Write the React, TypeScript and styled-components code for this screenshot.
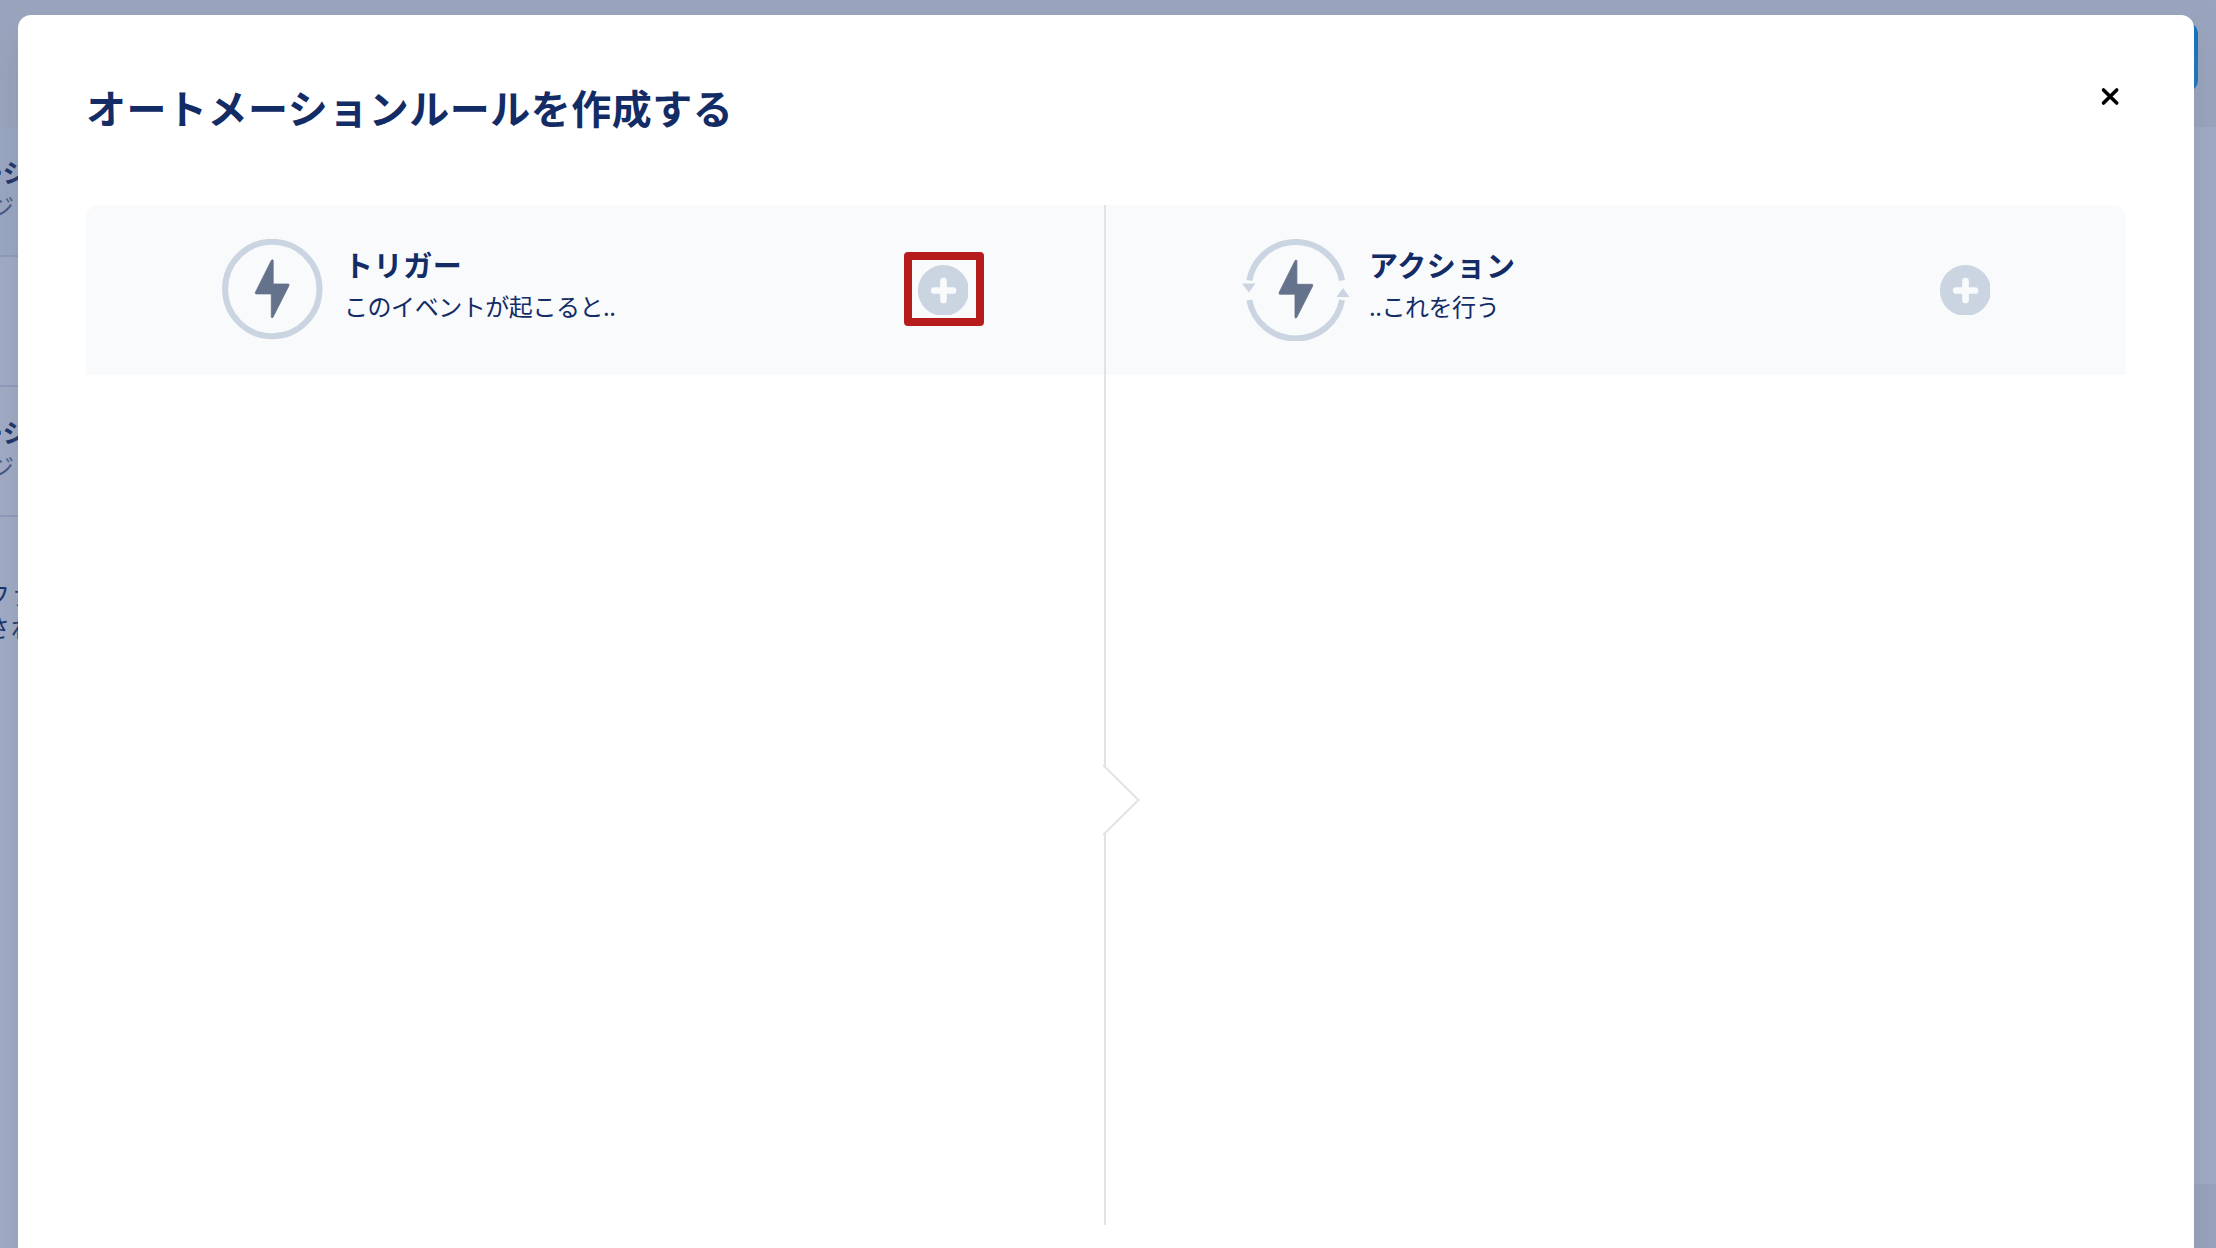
import React from 'react';
import styled, { createGlobalStyle } from 'styled-components';

const GlobalStyle = createGlobalStyle`
  * {
    box-sizing: border-box;
  }
  body {
    margin: 0;
    overflow: hidden;
    color: #132c66;
    font-family: 'Noto Sans CJK JP', sans-serif;
  }
  h1, h2, p {
    margin: 0;
  }
`;

const Page = styled.div`
  position: relative;
  display: flex;
  flex-direction: column;
  width: 100vw;
  height: 100vh;
  overflow: hidden;
  background: #a1abc6;
`;

const TopBar = styled.header`
  display: flex;
  justify-content: flex-end;
  flex: none;
  height: 127px;
  padding: 22px 18px 0 0;
  background: #9aa4be;
`;

const CreateButton = styled.div`
  width: 160px;
  height: 70px;
  border-radius: 12px;
  background: #1170bf;
`;

const RuleRow = styled.div<{ tinted?: boolean }>`
  flex: none;
  width: 50%;
  height: 130px;
  padding-top: 27px;
  border-bottom: 2px solid #8f9abb;
  background: ${({ tinted }) => (tinted ? '#9ba6c3' : 'transparent')};
`;

const RuleName = styled.p`
  margin-left: -23px;
  font-size: 26px;
  font-weight: 700;
  line-height: 36px;
  white-space: nowrap;
`;

const RuleHint = styled.p`
  margin-left: -10px;
  color: #42567f;
  font-size: 24px;
  line-height: 32px;
  white-space: nowrap;
`;

const Note = styled.p`
  flex: 1;
  margin-left: -14px;
  padding-top: 60px;
  font-size: 24px;
  line-height: 33px;
  letter-spacing: 1px;
  white-space: nowrap;
`;

const BottomBar = styled.footer`
  flex: none;
  align-self: flex-end;
  width: 50%;
  height: 64px;
  background: #98a2be;
`;

const Modal = styled.section`
  position: absolute;
  top: 15px;
  left: 18px;
  right: 22px;
  bottom: -40px;
  display: flex;
  flex-direction: column;
  padding: 0 68px;
  border-radius: 13px;
  background: #fff;
  box-shadow: 0 20px 36px rgba(120, 138, 145, 0.35);
`;

const ModalHeader = styled.header`
  display: flex;
  justify-content: space-between;
  height: 190px;
  padding: 64px 6px 0 0;
`;

const Title = styled.h1`
  font-size: 40px;
  font-weight: 700;
  line-height: 56px;
  letter-spacing: 0.5px;
`;

const CloseButton = styled.button`
  width: 20px;
  height: 20px;
  margin-top: 7px;
  padding: 0;
  border: 0;
  background: none;
`;

const Columns = styled.div`
  display: flex;
  height: 1020px;
`;

const Column = styled.div<{ divided?: boolean }>`
  position: relative;
  flex: 0 0 50%;
  border-right: ${({ divided }) => (divided ? '2px solid #e0e4e8' : '0')};
`;

const ColumnHeader = styled.div<{ side: 'left' | 'right' }>`
  display: flex;
  align-items: flex-start;
  height: 170px;
  padding-left: 136px;
  padding-right: ${({ side }) => (side === 'left' ? '120px' : '136px')};
  border-radius: ${({ side }) =>
    side === 'left' ? '13px 0 0 0' : '0 13px 0 0'};
  background: #f9fafc;
`;

const IconBox = styled.div<{ side: 'left' | 'right' }>`
  flex: none;
  width: ${({ side }) => (side === 'left' ? '122px' : '127px')};
  padding-top: 34px;

  svg {
    display: block;
  }
`;

const Labels = styled.div`
  flex: 1;
  padding-top: 38px;
`;

const Heading = styled.h2`
  font-size: 29px;
  font-weight: 700;
  line-height: 42px;
  letter-spacing: 0.6px;
`;

const Hint = styled.p`
  font-size: 24px;
  line-height: 42px;
  letter-spacing: -0.45px;
`;

const AddButton = styled.button<{ highlighted?: boolean }>`
  display: flex;
  align-items: center;
  justify-content: center;
  width: ${({ highlighted }) => (highlighted ? '80px' : '50px')};
  height: ${({ highlighted }) => (highlighted ? '74px' : '50px')};
  margin-top: ${({ highlighted }) => (highlighted ? '47px' : '60px')};
  padding: ${({ highlighted }) => (highlighted ? '2px 2px 0 0' : '0')};
  border: ${({ highlighted }) => (highlighted ? '8px solid #b71c1c' : '0')};
  border-radius: 4px;
  background: none;

  svg {
    flex: none;
  }
`;

// sits on the divider and hides the piece of it behind the arrow
const Arrow = styled.svg`
  position: absolute;
  top: 559px;
  right: -37px;
`;

const BOLT =
  'M49.4 21.3L33.4 53.3Q33 54.9 34 54.9H49.3V78.2Q50 79.4 51 78.2L67 46.6Q67.4 45 66.3 45H51.2V21.3Q50.4 20.2 49.4 21.3Z';

function TriggerIcon() {
  return (
    <svg width="101" height="101" viewBox="0 0 101 101">
      <circle cx="50.3" cy="50" r="47.2" fill="none" stroke="#cbd5e1" strokeWidth="6" />
      <path d={BOLT} fill="#64728c" stroke="#64728c" strokeWidth="0.8" />
    </svg>
  );
}

function ActionIcon() {
  return (
    <svg width="108" height="102" viewBox="0 0 108 102">
      <g fill="none" stroke="#cbd5e1" strokeWidth="6">
        <path d="M7.3 41.5A47.2 47.2 0 0 1 100.1 41.5" />
        <path d="M7.3 61A47.2 47.2 0 0 0 100.1 61" />
      </g>
      <path d="M0 44.5H13.5L6.8 53.5Z M94.3 58H107.5L101 49Z" fill="#cbd5e1" />
      <path
        d={BOLT}
        transform="translate(3.7 0.3)"
        fill="#64728c"
        stroke="#64728c"
        strokeWidth="0.8"
      />
    </svg>
  );
}

function PlusIcon() {
  return (
    <svg width="50" height="50" viewBox="0 0 50 50">
      <circle cx="25.4" cy="25.5" r="25.5" fill="#cbd5e1" />
      <path
        d="M16.2 25.5H35M25.5 16.2V35"
        stroke="#f9fafc"
        strokeWidth="6.7"
        strokeLinecap="round"
      />
    </svg>
  );
}

interface RuleColumnProps {
  side: 'left' | 'right';
  icon: React.ReactNode;
  title: string;
  hint: string;
  highlighted?: boolean;
}

function RuleColumn({ side, icon, title, hint, highlighted }: RuleColumnProps) {
  return (
    <Column divided={side === 'left'}>
      <ColumnHeader side={side}>
        <IconBox side={side}>{icon}</IconBox>
        <Labels>
          <Heading>{title}</Heading>
          <Hint>{hint}</Hint>
        </Labels>
        <AddButton highlighted={highlighted}>
          <PlusIcon />
        </AddButton>
      </ColumnHeader>
      {side === 'left' && (
        <Arrow width="38" height="72" viewBox="0 0 38 72">
          <path d="M0 1L35.5 36L0 71Z" fill="#fff" />
          <path d="M0 1L35.5 36L0 71" fill="none" stroke="#e0e4e8" strokeWidth="2" />
        </Arrow>
      )}
    </Column>
  );
}

export default function App() {
  return (
    <>
      <GlobalStyle />
      <Page>
        <TopBar>
          <CreateButton />
        </TopBar>
        <RuleRow tinted>
          <RuleName>ーシ</RuleName>
          <RuleHint>ジ</RuleHint>
        </RuleRow>
        <RuleRow />
        <RuleRow>
          <RuleName>ーシ</RuleName>
          <RuleHint>ジ</RuleHint>
        </RuleRow>
        <Note>
          ファ
          <br />
          され
        </Note>
        <BottomBar />
        <Modal>
          <ModalHeader>
            <Title>オートメーションルールを作成する</Title>
            <CloseButton aria-label="閉じる">
              <svg width="20" height="20" viewBox="0 0 20 20">
                <path
                  d="M3.5 3.9L16.7 17.1M16.7 3.9L3.5 17.1"
                  stroke="#000"
                  strokeWidth="3.6"
                  strokeLinecap="round"
                />
              </svg>
            </CloseButton>
          </ModalHeader>
          <Columns>
            <RuleColumn
              side="left"
              icon={<TriggerIcon />}
              title="トリガー"
              hint="このイベントが起こると.."
              highlighted
            />
            <RuleColumn
              side="right"
              icon={<ActionIcon />}
              title="アクション"
              hint="..これを行う"
            />
          </Columns>
        </Modal>
      </Page>
    </>
  );
}
